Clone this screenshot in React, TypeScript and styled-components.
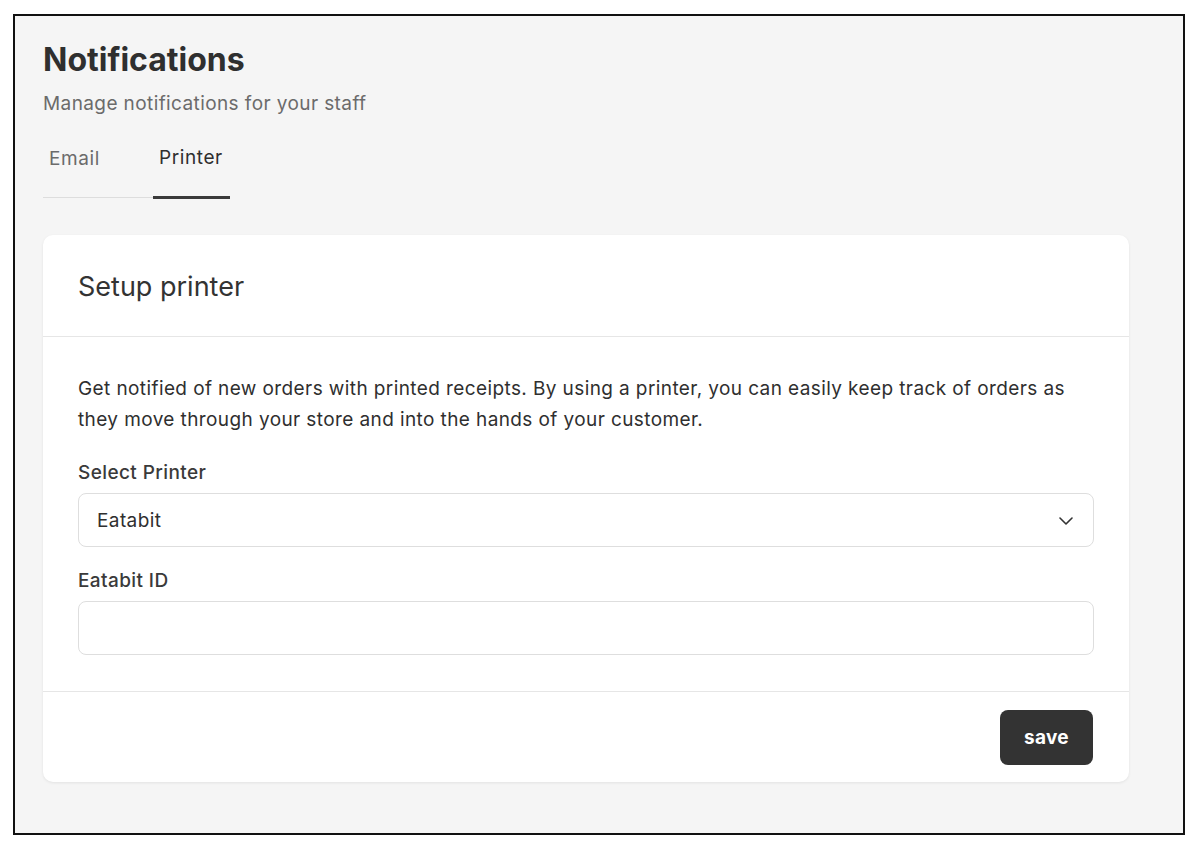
import React, { useState } from "react";
import styled, { createGlobalStyle } from "styled-components";

const GlobalStyle = createGlobalStyle`
    html, body {
        margin: 0;
        padding: 0;
        background: #ffffff;
        font-family: Inter, "Noto Sans", "Liberation Sans", sans-serif;
        color: #333333;
    }
    * {
        box-sizing: border-box;
    }
`;

const tabs = ["Email", "Printer"];

const App: React.FC = () => {
    const [activeTab, setActiveTab] = useState("Printer");
    const [printer, setPrinter] = useState("eatabit");
    const [printerId, setPrinterId] = useState("");

    return (
        <>
            <GlobalStyle />
            <Frame>
                <Content>
                    <Title>Notifications</Title>
                    <Subtitle>Manage notifications for your staff</Subtitle>
                    <TabList>
                        {tabs.map((tab) => (
                            <Tab key={tab} active={tab == activeTab} onClick={() => setActiveTab(tab)}>
                                {tab}
                            </Tab>
                        ))}
                    </TabList>
                    <Card>
                        <CardHeader>
                            <CardTitle>Setup printer</CardTitle>
                        </CardHeader>
                        <CardBody>
                            <Description>
                                Get notified of new orders with printed receipts. By using a printer, you can easily keep track of orders as
                                they move through your store and into the hands of your customer.
                            </Description>
                            <Field>
                                <Label htmlFor="printer">Select Printer</Label>
                                <SelectWrap>
                                    <Select id="printer" value={printer} onChange={(e) => setPrinter(e.target.value)}>
                                        <option value="eatabit">Eatabit</option>
                                    </Select>
                                    <Chevron width="14" height="8" viewBox="0 0 14 8" fill="none">
                                        <path d="M1 1l6 6 6-6" stroke="#333" strokeWidth="1.6" strokeLinecap="round" strokeLinejoin="round" />
                                    </Chevron>
                                </SelectWrap>
                            </Field>
                            <Field>
                                <Label htmlFor="eatabit-id">Eatabit ID</Label>
                                <Input id="eatabit-id" value={printerId} onChange={(e) => setPrinterId(e.target.value)} />
                            </Field>
                        </CardBody>
                        <CardFooter>
                            <SaveButton>save</SaveButton>
                        </CardFooter>
                    </Card>
                </Content>
            </Frame>
        </>
    );
};
export default App;

const Frame = styled.div`
    margin: 14px 0 0 13px;
    width: 1172px;
    height: 821px;
    border: 2px solid #111111;
    background: #f5f5f5;
    padding: 24px 0 0 28px;
`;

const Content = styled.div`
    width: 1086px;
    display: flex;
    flex-direction: column;
`;

const Title = styled.h1`
    margin: 0;
    font-size: 32px;
    line-height: 40px;
    font-weight: 700;
    color: #2f2f2f;
`;

const Subtitle = styled.p`
    margin: 11px 0 0;
    font-size: 19px;
    line-height: 26px;
    letter-spacing: 0.4px;
    color: #6b6b6b;
`;

const TabList = styled.div`
    margin-top: 28px;
    display: flex;
    align-self: flex-start;
`;

const Tab = styled.button<{ active: boolean }>`
    border: none;
    background: none;
    font-family: inherit;
    font-size: 19px;
    line-height: 26px;
    letter-spacing: 0.6px;
    font-weight: 400;
    color: ${(props) => (props.active ? "#2f2f2f" : "#6b6b6b")};
    padding: 0 6px 25px;
    cursor: pointer;
    border-bottom: ${(props) => (props.active ? "3px solid #3a3a3a" : "1px solid #dddddd")};
    margin-bottom: ${(props) => (props.active ? "0" : "1px")};
    width: ${(props) => (props.active ? "77px" : "110px")};
    text-align: left;
    white-space: nowrap;
    ${(props) => (props.active ? "" : "height: 53px;")}
`;

const Card = styled.div`
    margin-top: 36px;
    background: #ffffff;
    border-radius: 10px;
    box-shadow: 0 1px 3px rgba(0, 0, 0, 0.08);
    display: flex;
    flex-direction: column;
`;

const CardHeader = styled.div`
    height: 102px;
    padding: 0 35px;
    display: flex;
    align-items: center;
    border-bottom: 1px solid #e6e6e6;
`;

const CardTitle = styled.h2`
    margin: 0;
    padding-top: 2px;
    font-size: 27px;
    line-height: 34px;
    font-weight: 400;
    color: #333333;
`;

const CardBody = styled.div`
    padding: 36px 35px 36px;
    display: flex;
    flex-direction: column;
    gap: 21px;
    border-bottom: 1px solid #e6e6e6;
`;

const Description = styled.p`
    margin: 0 0 4px;
    font-size: 19px;
    line-height: 31px;
    letter-spacing: 0.4px;
    color: #2f2f2f;
`;

const Field = styled.div`
    display: flex;
    flex-direction: column;
    gap: 7px;
`;

const Label = styled.label`
    font-size: 19px;
    line-height: 26px;
    letter-spacing: 0.4px;
    font-weight: 500;
    color: #3a3a3a;
`;

const SelectWrap = styled.div`
    position: relative;
`;

const Select = styled.select`
    appearance: none;
    -webkit-appearance: none;
    width: 100%;
    height: 54px;
    padding: 0 50px 0 18px;
    font-family: inherit;
    font-size: 19px;
    letter-spacing: 0.4px;
    color: #2f2f2f;
    background: #ffffff;
    border: 1px solid #dedede;
    border-radius: 8px;
    outline: none;
`;

const Chevron = styled.svg`
    position: absolute;
    right: 21px;
    top: 24px;
    pointer-events: none;
`;

const Input = styled.input`
    width: 100%;
    height: 54px;
    padding: 0 18px;
    font-family: inherit;
    font-size: 19px;
    color: #2f2f2f;
    background: #ffffff;
    border: 1px solid #dedede;
    border-radius: 8px;
    outline: none;
`;

const CardFooter = styled.div`
    padding: 18px 36px 17px;
    display: flex;
    justify-content: flex-end;
`;

const SaveButton = styled.button`
    width: 93px;
    height: 55px;
    border: none;
    border-radius: 8px;
    background: #333333;
    color: #ffffff;
    font-family: inherit;
    font-size: 19px;
    letter-spacing: 0.3px;
    font-weight: 700;
    cursor: pointer;
`;
